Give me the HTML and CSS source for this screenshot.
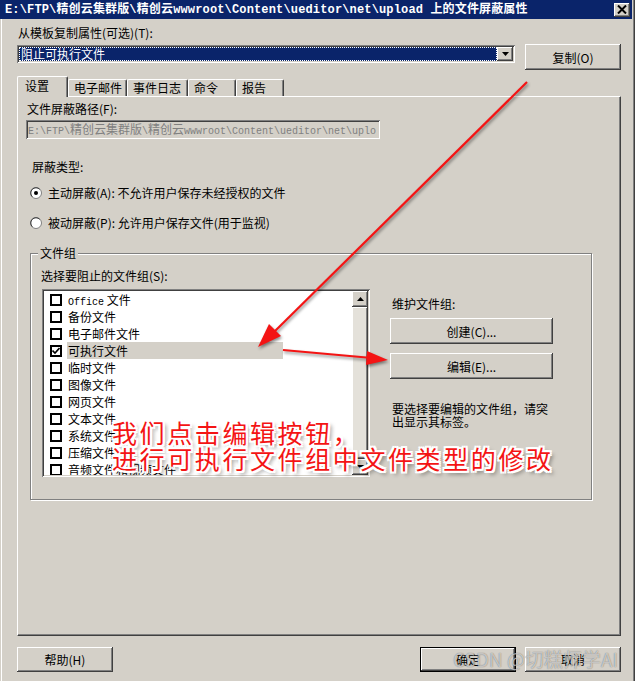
FILE: index.html
```html
<!DOCTYPE html>
<html lang="zh-CN">
<head>
<meta charset="utf-8">
<title>文件屏蔽属性</title>
<link rel="stylesheet" href="styles.css">
</head>
<body>
<div class="window">
  <div class="titlebar">
    <span class="title">E:\FTP\精创云集群版\精创云wwwroot\Content\ueditor\net\upload 上的文件屏蔽属性</span>
    <span class="close"><svg width="10" height="9" viewBox="0 0 10 9"><path d="M1 0.5 L9 8.5 M9 0.5 L1 8.5" stroke="#000" stroke-width="2" fill="none"/></svg></span>
  </div>
  <div class="content">
    <div class="label-template">从模板复制属性(可选)(T):</div>
    <div class="row-template">
      <div class="combo">
        <span class="combo-sel">阻止可执行文件</span>
        <span class="combo-btn"><svg width="7" height="4" viewBox="0 0 7 4"><path d="M0 0 H7 L3.5 4 Z" fill="#000"/></svg></span>
      </div>
      <button class="btn btn-copy">复制(O)</button>
    </div>
    <div class="tabs">
      <div class="tab tab-active t1">设置</div>
      <div class="tab t2">电子邮件</div>
      <div class="tab t3">事件日志</div>
      <div class="tab t4">命令</div>
      <div class="tab t5">报告</div>
    </div>
    <div class="panel">
      <div class="path-label">文件屏蔽路径(F):</div>
      <div class="path-field"><span class="m">E:\FTP\</span>精创云集群版<span class="m">\</span>精创云<span class="m">wwwroot\Content\ueditor\net\uplo</span></div>
      <div class="type-label">屏蔽类型:</div>
      <div class="radio radio-1">
        <svg width="12" height="12" viewBox="0 0 12 12"><circle cx="6" cy="6" r="5.5" fill="#fff" stroke="#808080"/><path d="M2.3 9.7 A4.6 4.6 0 0 1 9.7 2.3" stroke="#404040" fill="none"/><circle cx="6" cy="6" r="2" fill="#000"/></svg>
        <span>主动屏蔽(A): 不允许用户保存未经授权的文件</span>
      </div>
      <div class="radio radio-2">
        <svg width="12" height="12" viewBox="0 0 12 12"><circle cx="6" cy="6" r="5.5" fill="#fff" stroke="#808080"/><path d="M2.3 9.7 A4.6 4.6 0 0 1 9.7 2.3" stroke="#404040" fill="none"/></svg>
        <span>被动屏蔽(P): 允许用户保存文件(用于监视)</span>
      </div>
      <div class="groupbox">
        <div class="legend">文件组</div>
        <div class="group-label">选择要阻止的文件组(S):</div>
        <div class="group-body">
          <div class="listbox">
            <div class="list-items">
              <div class="item"><span class="cb"></span><span class="item-text"><span class="m">Office</span> 文件</span></div>
              <div class="item"><span class="cb"></span><span class="item-text">备份文件</span></div>
              <div class="item"><span class="cb"></span><span class="item-text">电子邮件文件</span></div>
              <div class="item selected"><span class="cb"><svg width="8" height="8" viewBox="0 0 8 8"><path d="M0.5 3.5 L3 6 L7.5 1" stroke="#000" stroke-width="1.6" fill="none"/></svg></span><span class="item-text">可执行文件</span></div>
              <div class="item"><span class="cb"></span><span class="item-text">临时文件</span></div>
              <div class="item"><span class="cb"></span><span class="item-text">图像文件</span></div>
              <div class="item"><span class="cb"></span><span class="item-text">网页文件</span></div>
              <div class="item"><span class="cb"></span><span class="item-text">文本文件</span></div>
              <div class="item"><span class="cb"></span><span class="item-text">系统文件</span></div>
              <div class="item"><span class="cb"></span><span class="item-text">压缩文件</span></div>
              <div class="item"><span class="cb"></span><span class="item-text">音频文件和视频文件</span></div>
            </div>
            <div class="scrollbar">
              <div class="sb-btn"><svg width="7" height="4" viewBox="0 0 7 4"><path d="M0 4 H7 L3.5 0 Z" fill="#000"/></svg></div>
              <div class="sb-thumb"></div>
              <div class="sb-btn"><svg width="7" height="4" viewBox="0 0 7 4"><path d="M0 0 H7 L3.5 4 Z" fill="#000"/></svg></div>
            </div>
          </div>
          <div class="maint">
            <div class="maint-label">维护文件组:</div>
            <button class="btn btn-wide btn-create">创建(C)...</button>
            <button class="btn btn-wide btn-edit">编辑(E)...</button>
            <div class="help">要选择要编辑的文件组，请突<br>出显示其标签。</div>
          </div>
        </div>
      </div>
    </div>
    <div class="footer">
      <button class="btn btn-foot">帮助(H)</button>
      <div class="footer-right">
        <button class="btn btn-foot btn-default">确定</button>
        <button class="btn btn-foot">取消</button>
      </div>
    </div>
  </div>

  <svg class="arrows" width="635" height="681" viewBox="0 0 635 681">
    <g class="arrow-shapes">
      <path d="M527 82 L272 334" stroke="#f41414" stroke-width="2.2" fill="none"/>
      <polygon points="258,347 281,336 269,324" fill="#f41414"/>
      <path d="M283 350 L372 358" stroke="#f41414" stroke-width="2.2" fill="none"/>
      <polygon points="388,360 367,351 366,365" fill="#f41414"/>
    </g>
  </svg>
  <div class="note">我们点击编辑按钮，<br>进行可执行文件组中文件类型的修改</div>
  <div class="watermark">CSDN @切糕师学AI</div>
</div>
</body>
</html>
```

FILE: styles.css
```css
* { box-sizing: border-box; }
html, body { margin: 0; padding: 0; }
body {
  width: 635px;
  height: 681px;
  overflow: hidden;
  background: #d4d0c8;
  font-family: "Noto Sans CJK SC", sans-serif;
  font-size: 12px;
  color: #000;
}
.window {
  position: relative;
  width: 635px;
  height: 681px;
  background: #d4d0c8;
  box-shadow: inset 1px 0 #d4d0c8, inset 2px 0 #fff, inset -1px 0 #404040, inset -2px 0 #808080, inset -3px 0 #d4d0c8;
}
.titlebar {
  height: 19px;
  margin-right: 3px;
  background: #0a246a;
  color: #fff;
  display: flex;
  align-items: center;
  justify-content: space-between;
  padding: 0 2px 0 5px;
}
.title {
  font-family: "Liberation Mono", "Noto Sans CJK SC", monospace;
  font-weight: bold;
  font-size: 12px;
  line-height: 14px;
  letter-spacing: 0.15px;
  white-space: nowrap;
}
.close {
  width: 16px;
  height: 14px;
  background: #d4d0c8;
  box-shadow: inset -1px -1px #404040, inset 1px 1px #fff, inset -2px -2px #808080;
  display: flex;
  align-items: center;
  justify-content: center;
}
.content {
  padding: 0 14px 0 17px;
}
.label-template {
  margin-top: 7px;
  padding-left: 1px;
  line-height: 14px;
}
.row-template {
  margin-top: 4px;
  display: flex;
  justify-content: space-between;
  align-items: flex-start;
}
.combo {
  margin-top: 1px;
  width: 498px;
  height: 18px;
  background: #fff;
  padding: 2px;
  display: flex;
  box-shadow: inset 1px 1px #808080, inset -1px -1px #fff, inset 2px 2px #404040, inset -2px -2px #d4d0c8;
}
.combo-sel {
  flex: 1;
  background: #0a246a;
  color: #fff;
  line-height: 14px;
  padding-left: 2px;
  outline: 1px dotted #fff;
  outline-offset: -1px;
}
.combo-btn {
  width: 16px;
  height: 14px;
  background: #d4d0c8;
  box-shadow: inset -1px -1px #404040, inset 1px 1px #fff, inset -2px -2px #808080;
  display: flex;
  align-items: center;
  justify-content: center;
}
.btn {
  background: #d4d0c8;
  border: 0;
  padding: 0;
  font: inherit;
  color: #000;
  display: flex;
  align-items: center;
  justify-content: center;
  box-shadow: inset -1px -1px #404040, inset 1px 1px #fff, inset -2px -2px #808080;
}
.btn-copy { width: 96px; height: 26px; }
.tabs {
  margin-top: 6px;
  height: 20px;
  display: flex;
  align-items: flex-end;
}
.tab {
  height: 17px;
  line-height: 16px;
  padding-left: 5px;
  background: #d4d0c8;
  border-top: 1px solid #fff;
  border-left: 1px solid #fff;
  border-right: 1px solid #404040;
  box-shadow: inset -1px 0 #808080;
  border-radius: 2px 2px 0 0;
}
.tab-active {
  height: 21px;
  margin-bottom: -1px;
  line-height: 18px;
  padding-left: 7px;
  position: relative;
  z-index: 1;
}
.t1 { width: 51px; }
.t2 { width: 59px; }
.t3 { width: 61px; }
.t4 { width: 48px; }
.t5 { width: 48px; }
.panel {
  height: 540px;
  border: 1px solid;
  border-color: #fff #404040 #404040 #fff;
  box-shadow: inset -1px -1px #808080;
}
.path-label {
  margin: 5px 0 0 9px;
  line-height: 14px;
}
.path-field {
  margin: 4px 0 0 8px;
  width: 354px;
  height: 19px;
  padding: 0 2px;
  line-height: 18px;
  color: #808080;
  white-space: nowrap;
  overflow: hidden;
  box-shadow: inset 1px 1px #808080, inset -1px -1px #fff, inset 2px 2px #404040, inset -2px -2px #d4d0c8;
}
.m {
  font-family: "Liberation Mono", monospace;
  font-size: 10px;
}
.type-label {
  margin: 21px 0 0 14px;
  line-height: 14px;
}
.radio {
  margin-left: 12px;
  height: 14px;
  display: flex;
  align-items: center;
  gap: 6px;
  line-height: 14px;
}
.radio-1 { margin-top: 12px; }
.radio-2 { margin-top: 16px; }
.groupbox {
  position: relative;
  margin: 23px 0 0 12px;
  width: 562px;
  height: 247px;
  border: 1px solid #808080;
  box-shadow: inset 1px 1px #fff, 1px 1px #fff;
}
.legend {
  position: absolute;
  top: -8px;
  left: 7px;
  padding: 0 2px;
  background: #d4d0c8;
  line-height: 14px;
}
.group-label {
  margin: 15px 0 0 10px;
  line-height: 14px;
}
.group-body {
  margin: 6px 0 0 11px;
  display: flex;
  align-items: flex-start;
}
.listbox {
  width: 328px;
  height: 188px;
  padding: 2px;
  background: #fff;
  display: flex;
  box-shadow: inset 1px 1px #808080, inset -1px -1px #fff, inset 2px 2px #404040, inset -2px -2px #d4d0c8;
}
.list-items {
  flex: 1;
  overflow: hidden;
}
.item {
  height: 17px;
  display: flex;
  align-items: center;
  padding-left: 6px;
}
.cb {
  width: 12px;
  height: 12px;
  border: 2px solid #000;
  background: #fff;
  display: flex;
  align-items: center;
  justify-content: center;
  flex: none;
}
.item-text {
  margin-left: 5px;
  width: 216px;
  height: 17px;
  padding-left: 1px;
  line-height: 17px;
  white-space: nowrap;
}
.selected .item-text { background: #d4d0c8; }
.scrollbar {
  width: 16px;
  display: flex;
  flex-direction: column;
  background: #ece9e2;
}
.sb-btn {
  height: 16px;
  background: #d4d0c8;
  box-shadow: inset -1px -1px #404040, inset 1px 1px #fff, inset -2px -2px #808080;
  display: flex;
  align-items: center;
  justify-content: center;
}
.sb-thumb {
  flex: 1;
  background: #e4e1da;
  box-shadow: inset -1px -1px #404040, inset 1px 1px #fff, inset -2px -2px #808080;
}
.maint {
  margin-left: 20px;
}
.maint-label {
  margin-top: 8px;
  padding-left: 2px;
  line-height: 14px;
}
.btn-wide { width: 163px; height: 26px; }
.btn-create { margin-top: 7px; }
.btn-edit { margin-top: 9px; }
.help {
  margin-top: 23px;
  padding-left: 2px;
  line-height: 13px;
}
.footer {
  margin-top: 11px;
  display: flex;
  justify-content: space-between;
}
.footer-right {
  display: flex;
  gap: 9px;
}
.btn-foot { width: 96px; height: 25px; }
.btn-default {
  box-shadow: inset 0 0 0 1px #000, inset -2px -2px #404040, inset 2px 2px #fff, inset -3px -3px #808080;
}
.arrows {
  position: absolute;
  left: 0;
  top: 0;
  pointer-events: none;
}
.arrow-shapes {
  filter: drop-shadow(1px 2px 1.5px rgba(0, 0, 0, 0.45));
}
.note {
  position: absolute;
  left: 112px;
  top: 419px;
  font-size: 25px;
  line-height: 26px;
  letter-spacing: 2.6px;
  color: #f41414;
  white-space: nowrap;
  text-shadow:
    -2px -2px 0 #fff, 2px -2px 0 #fff, -2px 2px 0 #fff, 2px 2px 0 #fff,
    0 -2px 0 #fff, 0 2px 0 #fff, -2px 0 0 #fff, 2px 0 0 #fff,
    3px 3px 4px rgba(0, 0, 0, 0.6);
}
.watermark {
  position: absolute;
  left: 453px;
  top: 648px;
  font-size: 19px;
  line-height: 22px;
  color: rgba(255, 255, 255, 0.6);
  text-shadow: 0 0 1px rgba(0, 0, 0, 0.55);
  white-space: nowrap;
  pointer-events: none;
}
```
